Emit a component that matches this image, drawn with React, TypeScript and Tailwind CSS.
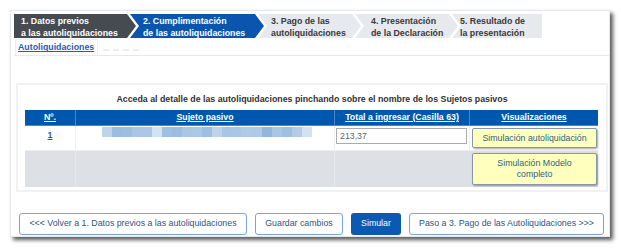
import React from 'react';

const steps = [
  { l1: '1. Datos previos', l2: 'a las autoliquidaciones', w: 'w-[122px]', pl: 'pl-[7px]', bg: 'bg-[#464b51] text-white', shape: 'first' },
  { l1: '2. Cumplimentación', l2: 'de las autoliquidaciones', w: 'w-[134px]', pl: 'pl-[13px]', bg: 'bg-[#0b55ae] text-white', shape: 'mid' },
  { l1: '3. Pago de las', l2: 'autoliquidaciones', w: 'w-[103px]', pl: 'pl-[13px]', bg: 'bg-[#e6e9ed] text-[#3a3a3a]', shape: 'mid' },
  { l1: '4. Presentación', l2: 'de la Declaración', w: 'w-[103px]', pl: 'pl-[16px]', bg: 'bg-[#e6e9ed] text-[#3a3a3a]', shape: 'mid' },
  { l1: '5. Resultado de', l2: 'la presentación', w: 'w-[90px]', pl: 'pl-[8px]', bg: 'bg-[#e6e9ed] text-[#3a3a3a]', shape: 'last' },
];

const clip: Record<string, string> = {
  first: '[clip-path:polygon(0_0,calc(100%_-_9px)_0,100%_50%,calc(100%_-_9px)_100%,0_100%)]',
  mid: '[clip-path:polygon(0_0,calc(100%_-_9px)_0,100%_50%,calc(100%_-_9px)_100%,0_100%,9px_50%)]',
  last: '[clip-path:polygon(0_0,100%_0,100%_100%,0_100%,9px_50%)]',
};

// bloques del nombre pixelado
const blur = [
  '#bed4ec', '#9dbde0', '#9fbfe1', '#aac6e4', '#abc7e5', '#d3e3f3', '#a0c0e2', '#9cbde0',
  '#a9c7e5', '#abc8e5', '#9fbfe1', '#bcd3ec', '#a7c5e4', '#a9c6e4', '#b0cbe7', '#aecae6',
  '#93b6dd', '#a9c6e4', '#9fbfe1', '#b2cce8', '#d2e2f3',
];

export default function App() {
  return (
    <div className="w-[621px] h-[249px] bg-white pt-[10px] pl-[10px] font-['Liberation_Sans',Arial,sans-serif] text-[8.8px]">
      <div className="w-[600px] h-[227px] bg-white border border-[#e6e7e9] shadow-[3px_3px_4px_rgba(0,0,0,0.65)] pt-[3px] pl-[3px]">
        {/* pasos */}
        <div className="flex h-[24px]">
          {steps.map((s, i) => (
            <div
              key={i}
              className={`${s.w} ${s.pl} ${s.bg} ${clip[s.shape]} ${i > 0 ? '-ml-[6px]' : ''} h-[24px] pt-[1px] font-bold leading-[12px] whitespace-nowrap overflow-hidden`}
            >
              <div>{s.l1}</div>
              <div>{s.l2}</div>
            </div>
          ))}
        </div>

        {/* pestañas */}
        <div className="flex items-end mt-[2px] h-[16px] border-b border-[#e8e9eb]">
          <div className="ml-[1px] h-[16px] pl-[2px] pr-[3px] border border-b-0 border-[#eceef0] flex items-center pt-[1px]">
            <span className="font-bold text-[#1d5fb8] underline">Autoliquidaciones</span>
          </div>
          <div className="flex gap-[4px] ml-[5px] mb-[4px]">
            <div className="w-[6px] h-[2px] bg-[#eceef1]" />
            <div className="w-[6px] h-[2px] bg-[#eceef1]" />
            <div className="w-[6px] h-[2px] bg-[#eceef1]" />
            <div className="w-[6px] h-[2px] bg-[#eceef1]" />
          </div>
        </div>

        {/* detalle */}
        <div className="ml-[2px] mt-[27px] w-[592px] h-[109px] border-2 border-[#f0f1f3] px-[7px]">
          <div className="h-[25px] pt-[9px] text-center font-bold text-[#333] leading-[10px]">
            Acceda al detalle de las autoliquidaciones pinchando sobre el nombre de los Sujetos pasivos
          </div>
          <div className="grid grid-cols-[50px_259px_135px_129px] w-[573px]">
            <div className="h-[16px] bg-[#0057ae] border-b border-[#4a86c8] text-white font-bold underline text-center leading-[15px]">Nº.</div>
            <div className="h-[16px] bg-[#0057ae] border-b border-l border-[#4a86c8] text-white font-bold underline text-center leading-[15px]">Sujeto pasivo</div>
            <div className="h-[16px] bg-[#0057ae] border-b border-l border-[#4a86c8] text-white font-bold underline text-center leading-[15px]">Total a ingresar (Casilla 63)</div>
            <div className="h-[16px] bg-[#0057ae] border-b border-l border-[#4a86c8] text-white font-bold underline text-center leading-[15px]">Visualizaciones</div>

            <div className="h-[25px] bg-white border-b border-[#eceef1] text-center pt-[3px]">
              <span className="font-bold text-[#1d5fb8] underline">1</span>
            </div>
            <div className="h-[25px] bg-white border-b border-l border-[#eceef1] pl-[26px] pt-[1px]">
              <div className="flex h-[10px]">
                {blur.map((c, i) => (
                  <div key={i} className="w-[10px] h-[10px]" style={{ backgroundColor: c }} />
                ))}
              </div>
            </div>
            <div className="h-[25px] bg-white border-b border-l border-[#eceef1] pl-[1px] pt-[2px]">
              <div className="w-[131px] h-[16px] border border-[#a9abae] text-[#666] pl-[3px] leading-[14px]">213,37</div>
            </div>
            <div className="h-[25px] bg-white border-b border-l border-[#eceef1] pl-[2px] pt-[2px]">
              <button className="w-[125px] h-[20px] bg-[#ffffbe] border border-[#8797ab] rounded-[2px] shadow-[1px_1px_2px_rgba(0,0,0,0.35)] text-[#2f5f80] leading-[18px]">
                Simulación autoliquidación
              </button>
            </div>

            <div className="h-[36px] bg-[#dde0e4]" />
            <div className="h-[36px] bg-[#dde0e4] border-l border-[#e6e8eb]" />
            <div className="h-[36px] bg-[#dde0e4] border-l border-[#e6e8eb]" />
            <div className="h-[36px] bg-[#dde0e4] pl-[3px] pt-[2px]">
              <button className="w-[125px] h-[32px] bg-[#ffffbe] border border-[#8797ab] rounded-[2px] shadow-[1px_1px_2px_rgba(0,0,0,0.35)] text-[#2f5f80] leading-[11px]">
                Simulación Modelo<br />completo
              </button>
            </div>
          </div>
        </div>

        {/* botones */}
        <div className="flex gap-[8px] ml-[5px] mt-[21px]">
          <button className="w-[228px] h-[22px] border border-[#7aa5d8] rounded-[3px] bg-white text-[#2a5589]">
            &lt;&lt;&lt; Volver a 1. Datos previos a las autoliquidaciones
          </button>
          <button className="w-[88px] h-[22px] border border-[#7aa5d8] rounded-[3px] bg-white text-[#2a5589]">
            Guardar cambios
          </button>
          <button className="w-[50px] h-[22px] rounded-[3px] bg-[#0c59b3] text-white">
            Simular
          </button>
          <button className="w-[195px] h-[22px] border border-[#7aa5d8] rounded-[3px] bg-white text-[#2a5589]">
            Paso a 3. Pago de las Autoliquidaciones &gt;&gt;&gt;
          </button>
        </div>
      </div>
    </div>
  );
}
